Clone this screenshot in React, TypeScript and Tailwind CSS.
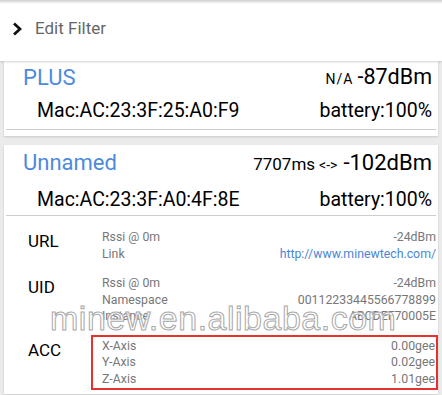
import React from 'react';

type Line = { label: string; value: string; link?: boolean };

const Section: React.FC<{ name: string; lines: Line[]; boxed?: boolean }> = ({ name, lines, boxed }) => {
  if (boxed) {
    return (
      <div className="flex items-start pt-[10px]">
        <div className="w-[87px] shrink-0 pl-[24px] pt-[5px] text-[17px] leading-[20px] text-black">{name}</div>
        <div className="flex-1 border-2 border-[#e8312f] pl-[9px] pr-[1px] py-[1px]">
          {lines.map((l) => (
            <div key={l.label} className="flex justify-between h-[16.5px] leading-[16.5px] text-[12.3px] text-[#777]">
              <span>{l.label}</span>
              <span>{l.value}</span>
            </div>
          ))}
        </div>
      </div>
    );
  }
  return (
    <div className="flex items-start pt-[13px]">
      <div className="w-[98px] shrink-0 pl-[24px] pt-[2px] text-[17px] leading-[20px] text-black">{name}</div>
      <div className="flex-1 pr-[2px]">
        {lines.map((l) => (
          <div key={l.label} className="flex justify-between h-[16.5px] leading-[16.5px] text-[12.3px] text-[#777]">
            <span>{l.label}</span>
            <span className={l.link ? 'text-[#4a86d6]' : ''}>{l.value}</span>
          </div>
        ))}
      </div>
    </div>
  );
};

export default function App() {
  return (
    <div className="relative w-[442px] h-[395px] overflow-hidden bg-[#ebebeb] font-['Roboto',sans-serif]">
      {/* Header */}
      <div className="relative z-10 h-[61px] bg-white shadow-[0_1px_2px_rgba(0,0,0,0.18)]">
        <div className="h-[4px] bg-gradient-to-b from-[#cfcfcf] to-white" />
        <div className="flex items-center h-[50px] pl-[12px]">
          <svg width="10" height="14" viewBox="0 0 10 14" className="shrink-0">
            <polyline points="2,1.5 8,7 2,12.5" fill="none" stroke="#111" strokeWidth="2.8" strokeLinejoin="miter" />
          </svg>
          <span className="ml-[13px] text-[17px] text-[#666]">Edit Filter</span>
        </div>
      </div>

      {/* Card 1 */}
      <div className="mx-[4px] bg-white shadow-[0_1px_2px_rgba(0,0,0,0.15)] pb-[6px]">
        <div className="flex items-center justify-between h-[32px] pl-[19px] pr-[6px]">
          <span className="text-[22px] text-[#4d8ade]">PLUS</span>
          <span className="flex items-baseline text-black">
            <span className="text-[14px] tracking-[1px] mr-[4px]">N/A</span>
            <span className="text-[21.5px]">-87dBm</span>
          </span>
        </div>
        <div className="flex items-center justify-between h-[36px] pl-[33px] pr-[6px] text-[19.5px] text-black">
          <span>Mac:AC:23:3F:25:A0:F9</span>
          <span>battery:100%</span>
        </div>
        <div className="mx-[2px] h-px bg-[#cdcdcd]" />
      </div>

      {/* Card 2 */}
      <div className="mx-[4px] mt-[9px] bg-white shadow-[0_1px_2px_rgba(0,0,0,0.15)] pb-[4px]">
        <div className="flex items-center justify-between h-[34px] pl-[19px] pr-[6px]">
          <span className="text-[22px] text-[#4d8ade]">Unnamed</span>
          <span className="flex items-baseline text-black">
            <span className="text-[17px]">7707ms</span>
            <span className="text-[14px] ml-[4px] mr-[6px]">&lt;-&gt;</span>
            <span className="text-[22px]">-102dBm</span>
          </span>
        </div>
        <div className="flex items-center justify-between h-[36px] pt-[5px] pl-[33px] pr-[6px] text-[19.5px] text-black">
          <span>Mac:AC:23:3F:A0:4F:8E</span>
          <span>battery:100%</span>
        </div>
        <div className="mx-[2px] h-px bg-[#cdcdcd]" />

        <Section
          name="URL"
          lines={[
            { label: 'Rssi @ 0m', value: '-24dBm' },
            { label: 'Link', value: 'http://www.minewtech.com/', link: true },
          ]}
        />
        <Section
          name="UID"
          lines={[
            { label: 'Rssi @ 0m', value: '-24dBm' },
            { label: 'Namespace', value: '00112233445566778899' },
            { label: 'Instance', value: 'ABCDEF70005E' },
          ]}
        />
        <Section
          name="ACC"
          boxed
          lines={[
            { label: 'X-Axis', value: '0.00gee' },
            { label: 'Y-Axis', value: '0.02gee' },
            { label: 'Z-Axis', value: '1.01gee' },
          ]}
        />
      </div>

      {/* Watermark */}
      <div className="absolute left-[50px] top-[298px] text-[34px] leading-[40px] font-['Liberation_Sans',sans-serif] tracking-[0.5px] text-white/70 [-webkit-text-stroke:1px_#a8a8a8] pointer-events-none">
        minew.en.alibaba.com
      </div>
    </div>
  );
}
